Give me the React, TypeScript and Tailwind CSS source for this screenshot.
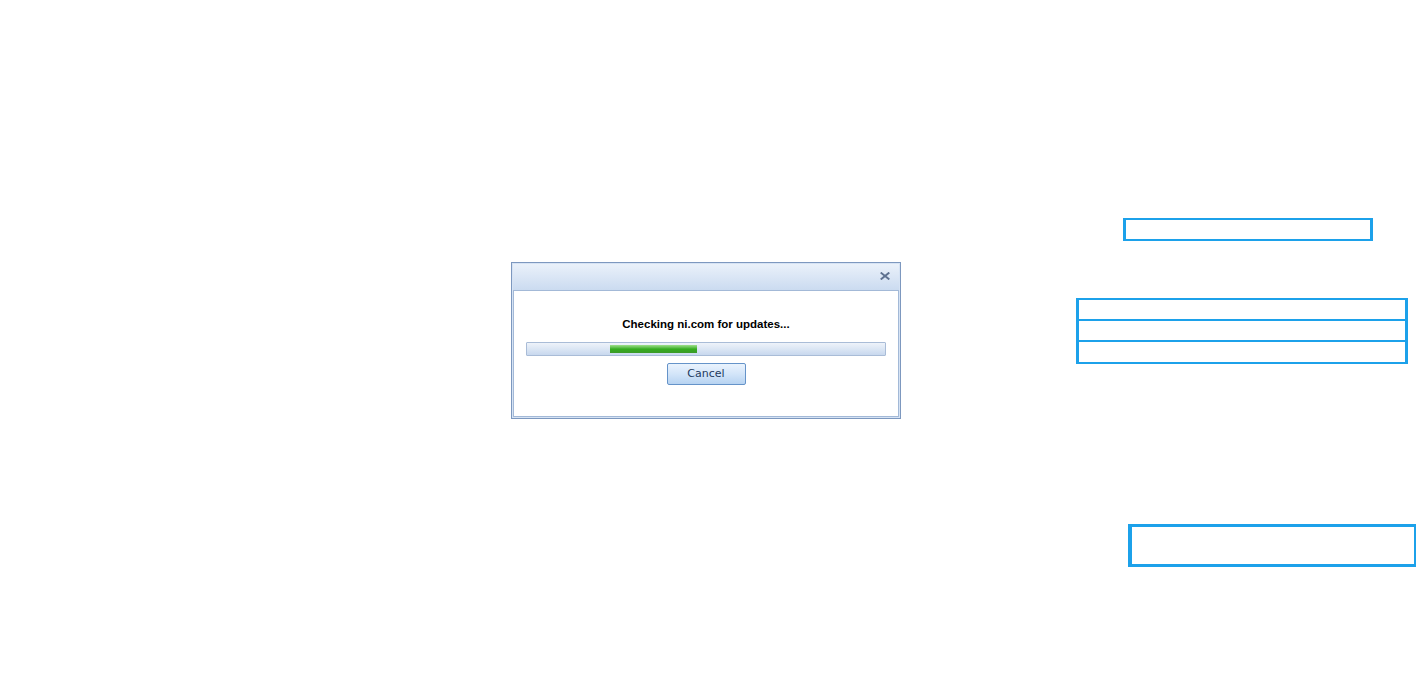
const font = { fontFamily: 'Tahoma, "DejaVu Sans", "Liberation Sans", sans-serif' }

function Highlight({ className }: { className: string }) {
  return <div className={`absolute border-[#1ca1ea] bg-white ${className}`} />
}

function CloseGlyph() {
  return (
    <svg width="10" height="8" viewBox="0 0 10 8" className="text-[#5f7290]">
      <path d="M1.5 1.2 L8.5 6.8 M8.5 1.2 L1.5 6.8" stroke="currentColor" strokeWidth="2" strokeLinecap="square" fill="none" />
    </svg>
  )
}

function UpdateDialog() {
  return (
    <div className="w-[390px] h-[157px] border border-[#7d98bf] bg-[#d6e3f4] flex flex-col p-px">
      {/* title bar */}
      <div className="h-[26px] bg-gradient-to-b from-[#eaf1fa] to-[#cbdbf0] flex items-center justify-end pr-[9px] pb-[1px]">
        <CloseGlyph />
      </div>

      {/* body */}
      <div className="flex-1 border border-[#a3b9d7] bg-white flex flex-col items-center px-3 pt-[26px]">
        <p
          className="text-[11.5px] leading-[14px] font-bold text-black"
          style={{ fontFamily: '"Liberation Sans", Arial, sans-serif' }}
        >
          Checking ni.com for updates...
        </p>

        <div className="mt-[11px] w-full h-[14px] border border-[#a9bcd7] rounded-[1px] bg-gradient-to-b from-[#eef3fa] via-[#dbe6f4] to-[#c8d8ee] flex items-center pl-[83px]">
          <div className="w-[87px] h-[8px] bg-gradient-to-b from-[#9ee08a] via-[#33ad1d] to-[#3c9a28]" />
        </div>

        <button
          className="mt-[7px] w-[79px] h-[22px] border border-[#6593c9] rounded-[2px] bg-gradient-to-b from-[#eaf3fd] via-[#d3e5f9] to-[#b7d3f1] text-[11px] text-[#1e3a5f] leading-none"
          style={font}
        >
          Cancel
        </button>
      </div>
    </div>
  )
}

export default function App() {
  return (
    <div className="relative w-[1416px] h-[683px] bg-white overflow-hidden">
      <div className="h-full flex items-center justify-center">
        <div className="ml-[-4px] mt-[-3px]">
          <UpdateDialog />
        </div>
      </div>

      {/* highlight boxes */}
      <Highlight className="left-[1123px] top-[218px] w-[250px] h-[23px] border-x-[3px] border-y-2" />
      <div className="absolute left-[1076px] top-[298px] w-[332px] flex flex-col">
        <div className="h-[23px] border-x-[3px] border-y-2 border-[#1ca1ea]" />
        <div className="h-[23px] mt-[-2px] border-x-[3px] border-y-2 border-[#1ca1ea]" />
        <div className="h-[24px] mt-[-2px] border-x-[3px] border-y-2 border-[#1ca1ea]" />
      </div>
      <Highlight className="left-[1128px] top-[524px] w-[289px] h-[43px] border-[3px] border-l-4" />
    </div>
  )
}
